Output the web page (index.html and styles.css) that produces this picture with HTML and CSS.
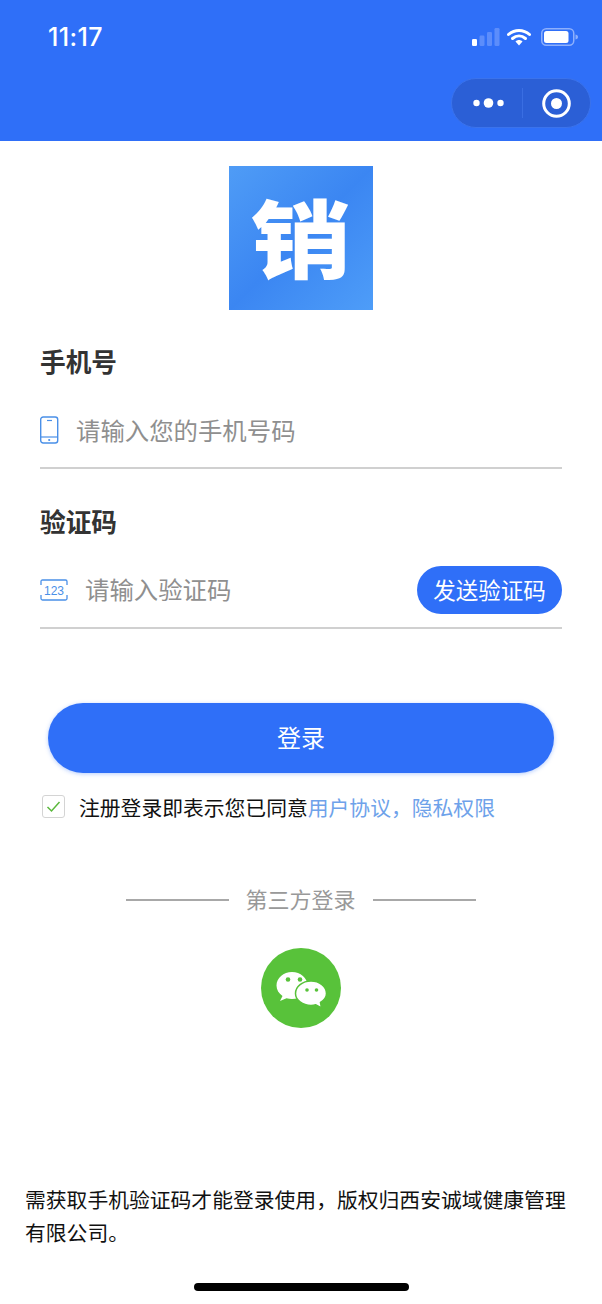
FILE: index.html
```html
<!DOCTYPE html>
<html lang="zh">
<head>
<meta charset="utf-8">
<title>登录</title>
<link rel="stylesheet" href="styles.css">
</head>
<body>
<div class="page">
  <header class="header">
    <div class="status">
      <span class="time">11:17</span>
      <div class="status-icons">
        <svg class="signal" width="28" height="18" viewBox="0 0 28 18"><rect x="0" y="11" width="5" height="7" rx="1.2" fill="#fff"/><rect x="7.5" y="7.5" width="5" height="10.5" rx="1.2" fill="#5c8dfb"/><rect x="15" y="4" width="5" height="14" rx="1.2" fill="#5c8dfb"/><rect x="22.500" y="0" width="5" height="18" rx="1.200" fill="#5c8dfb"/></svg>
        <svg class="wifi" width="24" height="18" viewBox="0 0 24 18"><path d="M1.500 6.500C7.500 1 16.500 1 22.500 6.500" fill="none" stroke="#fff" stroke-width="3" stroke-linecap="round"/><path d="M5.500 10.500C9.500 7 14.500 7 18.500 10.500" fill="none" stroke="#fff" stroke-width="3" stroke-linecap="round"/><path d="M8.500 13.500C10.500 11.500 13.500 11.500 15.500 13.500L12 17.500Z" fill="#fff"/></svg>
        <svg class="battery" width="37" height="18" viewBox="0 0 37 18"><rect x="0.750" y="0.750" width="32" height="16.500" rx="4.500" fill="none" stroke="#8eb0fc" stroke-width="1.500"/><rect x="3" y="3" width="24.500" height="12" rx="2.500" fill="#fff"/><path d="M34.500 6.500C36.500 7 37 8 37 9S36.500 11 34.500 11.500Z" fill="#8eb0fc"/></svg>
      </div>
    </div>
    <div class="capsule-row">
      <div class="capsule">
        <div class="capsule-part">
          <svg width="31" height="12" viewBox="0 0 31 12"><circle cx="3.500" cy="6" r="3.200" fill="#fff"/><circle cx="15.500" cy="6" r="4.800" fill="#fff"/><circle cx="27.500" cy="6" r="3.200" fill="#fff"/></svg>
        </div>
        <span class="capsule-divider"></span>
        <div class="capsule-part">
          <svg width="29" height="29" viewBox="0 0 29 29"><circle cx="14.500" cy="14.500" r="12.800" fill="none" stroke="#fff" stroke-width="3"/><circle cx="14.500" cy="14.500" r="5.500" fill="#fff"/></svg>
        </div>
      </div>
    </div>
  </header>

  <main class="content">
    <div class="logo"><span class="logo-glyph">销</span></div>

    <section class="field">
      <h2 class="field-label">手机号</h2>
      <div class="field-row">
        <svg class="phone-icon" width="19" height="28" viewBox="0 0 19 28"><rect x="0.700" y="1" width="17" height="26" rx="2.500" fill="none" stroke="#4a90e8" stroke-width="1.400"/><path d="M1 21H18" stroke="#4a90e8" stroke-width="1.200"/><path d="M7 4.500H12" stroke="#4a90e8" stroke-width="1.200"/><circle cx="9.200" cy="24" r="1.100" fill="#4a90e8"/></svg>
        <span class="placeholder">请输入您的手机号码</span>
      </div>
    </section>

    <section class="field field-code">
      <h2 class="field-label">验证码</h2>
      <div class="field-row">
        <svg class="code-icon" width="28" height="22" viewBox="0 0 28 22"><path d="M1 6V2.500Q1 1 2.500 1H25.500Q27 1 27 2.500V6M1 16V19.500Q1 21 2.500 21H25.500Q27 21 27 19.500V16" fill="none" stroke="#4a90e8" stroke-width="1.300"/><text x="14" y="15.500" text-anchor="middle" class="code-icon-text">123</text></svg>
        <span class="placeholder">请输入验证码</span>
        <button class="send-btn">发送验证码</button>
      </div>
    </section>

    <button class="login-btn">登录</button>

    <div class="agree">
      <span class="checkbox"><svg width="15" height="13" viewBox="0 0 15 13"><path d="M1.500 7L5.500 11L13.500 2" fill="none" stroke="#5ab83c" stroke-width="1.500"/></svg></span>
      <span class="agree-text">注册登录即表示您已同意<span class="agree-link">用户协议&#xFF0C;隐私权限</span></span>
    </div>

    <div class="third">
      <span class="third-line"></span>
      <span class="third-text">第三方登录</span>
      <span class="third-line"></span>
    </div>

    <div class="wechat">
      <svg width="80" height="80" viewBox="0 0 80 80">
        <path d="M31 24C22.500 24 15.500 30.200 15.500 37.500C15.500 41.800 17.800 45.400 21.500 48L19 53L25.500 50.300C27.300 50.800 29 51 31 51C39.500 51 46.500 45 46.500 37.500C46.500 30.200 39.500 24 31 24Z" fill="#fff"/>
        <path d="M50 33C41.500 33 34.500 38.500 34.500 45.500C34.500 52 41.500 57.500 50 57.500C51.800 57.500 53.300 57.300 54.800 56.800L60.500 60L59.500 54.500C63 52.300 65.500 49.200 65.500 45.500C65.500 38.500 58.500 33 50 33Z" fill="#fff" stroke="#58c23a" stroke-width="1.500"/>
        <circle cx="27" cy="31.500" r="2.300" fill="#58c23a"/><circle cx="39" cy="31.500" r="2.300" fill="#58c23a"/>
        <circle cx="46" cy="42" r="1.800" fill="#58c23a"/><circle cx="55.500" cy="42" r="1.800" fill="#58c23a"/>
      </svg>
    </div>

    <p class="notice">需获取手机验证码才能登录使用&#xFF0C;版权归西安诚域健康管理有限公司。</p>
  </main>

  <div class="home-bar"><span class="home-indicator"></span></div>
</div>
</body>
</html>
```
FILE: styles.css
```css
* { box-sizing: border-box; }
html, body { margin: 0; padding: 0; background: #fff; }
body { font-family: "Noto Sans CJK SC", "Liberation Sans", sans-serif; }
.page { width: 602px; height: 1304px; display: flex; flex-direction: column; overflow: hidden; }

.header { height: 141px; background: #2f6ff8; padding: 22px 11px 0 48px; flex: none; }
.status { height: 30px; display: flex; align-items: center; justify-content: space-between; padding-right: 13px; }
.time { font-family: Inter, Roboto, sans-serif; font-size: 25px; font-weight: 500; color: #fff; letter-spacing: 0.4px; }
.status-icons { display: flex; align-items: center; }
.status-icons svg { display: block; }
.signal { margin-right: 7px; }
.wifi { margin-right: 10px; }
.capsule-row { display: flex; justify-content: flex-end; margin-top: 26px; }
.capsule { width: 140px; height: 50px; border-radius: 25px; background: #2b5fd6; border: 1px solid #3b73ec; padding-left: 3px; display: flex; align-items: center; }
.capsule-part { flex: 1; display: flex; justify-content: center; align-items: center; }
.capsule-part svg { display: block; }
.capsule-divider { width: 1px; height: 30px; background: #3a6ee2; }

.content { flex: 1; display: flex; flex-direction: column; min-height: 0; padding: 25px 0 0; }
.logo { width: 144px; height: 144px; margin: 0 0 0 229px; padding-bottom: 6px; flex: none; background: linear-gradient(135deg, #4f9cf6 0%, #3b86f2 50%, #4e9df8 100%); display: flex; align-items: center; justify-content: center; }
.logo-glyph { font-size: 100px; line-height: 120px; font-weight: 900; color: #fff; transform: scaleY(0.85); }

.field { margin: 33px 40px 0; height: 126px; border-bottom: 2px solid #d0d0d0; flex: none; }
.field-code { margin-top: 34px; }
.field-label { margin: 0; font-size: 25.700px; line-height: 36px; font-weight: 700; color: #333; }
.field-row { display: flex; align-items: center; height: 48px; margin-top: 27px; }
.phone-icon { margin-right: 17px; flex: none; }
.code-icon { margin-right: 17px; flex: none; }
.code-icon-text { font-family: "Liberation Sans", sans-serif; font-size: 12px; fill: #4a90e8; }
.placeholder { font-size: 24.400px; color: #8f8f8f; line-height: 34px; }
.field-code .placeholder { padding-bottom: 2px; }
.send-btn { margin-left: auto; width: 145px; height: 48px; border: 0; padding: 0 0 2px; border-radius: 24px; background: #2f6ff8; color: #fff; font-family: inherit; font-size: 22.500px; }

.login-btn { flex: none; width: 506px; height: 70px; margin: 74px 0 0 48px; border: 0; padding: 0 0 4px; border-radius: 35px; background: #2f6ff8; color: #fff; font-family: inherit; font-size: 24px; box-shadow: 0 1px 4px rgba(47, 111, 248, 0.35); }

.agree { display: flex; align-items: center; margin: 22px 0 0 42px; height: 23px; flex: none; }
.checkbox { width: 23px; height: 23px; border: 1px solid #d4d4d4; border-radius: 3px; display: flex; align-items: center; justify-content: center; flex: none; }
.checkbox svg { display: block; }
.agree-text { margin-left: 14px; font-size: 20.800px; line-height: 30px; color: #111; white-space: nowrap; }
.agree-link { color: #6ea2ea; }

.third { display: flex; align-items: center; justify-content: center; gap: 17px; margin-top: 70px; height: 24px; flex: none; }
.third-line { width: 103px; height: 2px; background: #a8a8a8; }
.third-text { font-size: 22px; line-height: 24px; color: #999; padding-bottom: 4px; margin-left: -1px; }

.wechat { width: 80px; height: 80px; margin: 36px 0 0 261px; flex: none; border-radius: 50%; background: #58c23a; }
.wechat svg { display: block; }

.notice { margin: auto 25px 0; font-size: 20.800px; line-height: 33px; color: #111; }

.home-bar { flex: none; padding: 34px 0 13px; display: flex; justify-content: center; }
.home-indicator { width: 215px; height: 8px; border-radius: 4px; background: #000; }
```
